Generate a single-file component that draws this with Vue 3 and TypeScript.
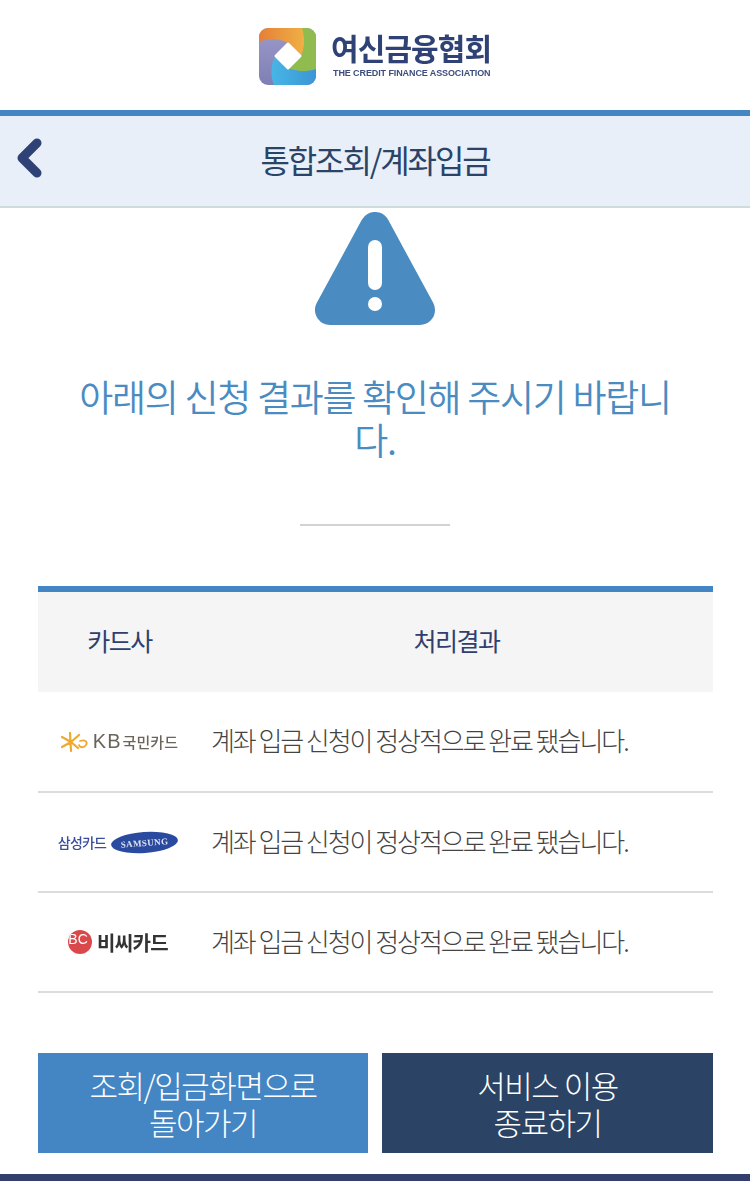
<script setup lang="ts">
type CardRow = { id: 'kb' | 'samsung' | 'bc'; result: string };

const rows: CardRow[] = [
  { id: 'kb', result: '계좌 입금 신청이 정상적으로 완료 됐습니다.' },
  { id: 'samsung', result: '계좌 입금 신청이 정상적으로 완료 됐습니다.' },
  { id: 'bc', result: '계좌 입금 신청이 정상적으로 완료 됐습니다.' },
];
</script>

<template>
  <div class="page">
    <header class="logo-bar">
      <svg class="logo-mark" width="57" height="57" viewBox="0 0 57 57">
        <defs>
          <clipPath id="tile"><rect width="57" height="57" rx="9" /></clipPath>
          <linearGradient id="warm" x1="0" x2="1" y1="0" y2="0">
            <stop offset="0" stop-color="#e57f38" />
            <stop offset="1" stop-color="#f0b044" />
          </linearGradient>
          <linearGradient id="cool" x1="0" x2="1" y1="0" y2="0">
            <stop offset="0" stop-color="#47b6e6" />
            <stop offset="1" stop-color="#3c95d6" />
          </linearGradient>
          <linearGradient id="violet" x1="0" x2="0" y1="0" y2="1">
            <stop offset="0" stop-color="#9c9ac8" />
            <stop offset="1" stop-color="#7f7fb6" />
          </linearGradient>
        </defs>
        <g clip-path="url(#tile)">
          <rect width="57" height="57" fill="url(#violet)" />
          <path d="M0 0h44C46 10 46 20 42 29L29 15C19 10 9 10 0 14z" fill="url(#warm)" />
          <path d="M43 0h14v42C48 44 38 44 29 40L42 29C46 20 46 10 43 0z" fill="#8fbb4f" />
          <path d="M16 29L29 40C38 44 48 44 57 41v16H15C11 47 12 37 16 29z" fill="url(#cool)" />
          <path d="M29 16L41 28 29 40 17 28z" fill="#fff" stroke="#fff" stroke-width="3" stroke-linejoin="round" />
        </g>
      </svg>
      <div class="logo-text">
        <span class="logo-ko">여신금융협회</span>
        <span class="logo-en">THE CREDIT FINANCE ASSOCIATION</span>
      </div>
    </header>

    <nav class="title-bar">
      <svg class="back" width="28" height="40" viewBox="0 0 28 40">
        <path d="M22 5L7 20l15 15" fill="none" stroke="#2f4276" stroke-width="9" stroke-linecap="round" stroke-linejoin="round" />
      </svg>
      <h1 class="title">통합조회/계좌입금</h1>
    </nav>

    <main class="content">
      <svg class="warn" width="120" height="113" viewBox="0 0 120 113">
        <path d="M60 15L15 98h90z" fill="#4a8cc2" stroke="#4a8cc2" stroke-width="30" stroke-linejoin="round" />
        <rect x="53" y="28" width="14" height="50" rx="7" fill="#fff" />
        <circle cx="60" cy="92" r="7" fill="#fff" />
      </svg>

      <p class="message">아래의 신청 결과를 확인해 주시기 바랍니다.</p>
      <div class="divider"></div>

      <div class="result-table">
        <div class="row head">
          <div class="col-card">카드사</div>
          <div class="col-result">처리결과</div>
        </div>
        <div v-for="row in rows" :key="row.id" class="row body">
          <div class="col-card">
            <div v-if="row.id === 'kb'" class="card-logo kb">
              <svg width="28" height="20" viewBox="0 0 28 20">
                <g stroke="#f0a92e" stroke-width="2.2" stroke-linecap="round" fill="none">
                  <path d="M1 5l9 5M1 15l9-5M9 1l1 18M10 10l8-7M10 10l7 6" />
                  <path d="M19 9c5-2 8 1 6 4s-6 3-7 0" stroke-width="1.8" />
                </g>
              </svg>
              <span class="kb-en">KB</span><span class="kb-ko">국민카드</span>
            </div>
            <div v-else-if="row.id === 'samsung'" class="card-logo">
              <span class="ss-ko">삼성카드</span>
              <span class="ss-oval"><span class="ss-en">SAMSUNG</span></span>
            </div>
            <div v-else class="card-logo">
              <span class="bc-dot">BC</span>
              <span class="bc-ko">비씨카드</span>
            </div>
          </div>
          <div class="col-result">{{ row.result }}</div>
        </div>
      </div>

      <div class="actions">
        <button class="btn btn-blue">조회/입금화면으로 돌아가기</button>
        <button class="btn btn-navy">서비스 이용 종료하기</button>
      </div>
    </main>

    <footer class="foot"></footer>
  </div>
</template>

<style>
html, body { margin: 0; background: #fff; }
</style>

<style scoped>
.page {
  width: 750px;
  height: 1181px;
  overflow: hidden;
  font-family: "Noto Sans CJK KR", "Liberation Sans", sans-serif;
  display: flex;
  flex-direction: column;
}

.logo-bar {
  height: 110px;
  display: flex;
  align-items: center;
  justify-content: center;
  gap: 15px;
  box-sizing: border-box;
}
.logo-mark { filter: blur(0.4px); margin-top: 2px; }
.logo-text { filter: blur(0.4px); display: flex; flex-direction: column; margin-top: -2px; width: 160px; }
.logo-ko {
  font-size: 30px;
  line-height: 34px;
  font-weight: 700;
  color: #2f4276;
  letter-spacing: -0.9px;
  white-space: nowrap;
}
.logo-en {
  font-family: "Liberation Sans", sans-serif;
  font-size: 9px;
  line-height: 10px;
  font-weight: 700;
  color: #3d4d7f;
  white-space: nowrap;
  letter-spacing: -0.1px;
  margin-top: 4px;
  padding-left: 2px;
}

.title-bar {
  height: 98px;
  box-sizing: border-box;
  border-top: 6px solid #4486c4;
  border-bottom: 2px solid #cfdcdc;
  background: #e9eff8;
  display: flex;
  align-items: center;
  justify-content: center;
  position: relative;
  padding-bottom: 5px;
}
.back { position: absolute; left: 15px; top: 22px; }
.title {
  margin: 0;
  font-size: 32px;
  font-weight: 400;
  letter-spacing: -2.1px;
  color: #2a4468;
}

.content {
  flex: 1;
  display: flex;
  flex-direction: column;
  align-items: center;
  padding: 4px 37px 0;
}
.warn { display: block; flex: none; }

.message {
  margin: 50px 0 0;
  width: 620px;
  font-size: 37px;
  line-height: 43px;
  font-weight: 350;
  letter-spacing: -1.3px;
  text-align: center;
  color: #4a8cc2;
  word-break: break-all;
}

.divider {
  width: 150px;
  height: 2px;
  background: #d2d2d2;
  margin-top: 63px;
  flex: none;
}

.result-table {
  width: 675px;
  align-self: flex-end;
  margin-top: 60px;
  border-top: 6px solid #4486c4;
}
.row { display: flex; align-items: center; height: 100px; box-sizing: border-box; }
.head {
  background: #f5f5f5;
  color: #2f3f6e;
  font-size: 25px;
  font-weight: 400;
  letter-spacing: -1.5px;
  padding-bottom: 4px;
}
.head .col-card { text-align: center; padding-left: 3px; box-sizing: border-box; }
.head .col-result { text-align: center; padding-left: 2px; }
.body { border-bottom: 2px solid #dcdcdc; }
.head + .body { height: 101px; }
.col-card { width: 160px; flex: none; }
.col-result { flex: 1; }
.body .col-result {
  font-size: 26px;
  font-weight: 300;
  letter-spacing: -2.05px;
  color: #444;
  white-space: nowrap;
  padding-left: 13px;
  padding-bottom: 3px;
}
.head + .body .col-result { padding-bottom: 5px; }

.card-logo {
  display: flex;
  align-items: center;
  justify-content: center;
  white-space: nowrap;
  filter: blur(0.3px);
}
.card-logo.kb { padding-left: 3px; }
.kb-en {
  font-family: "Liberation Sans", sans-serif;
  font-size: 20px;
  letter-spacing: 1px;
  color: #6b645a;
  margin-left: 4px;
}
.kb-ko { font-size: 15px; font-weight: 500; color: #6b645a; margin-left: 1px; letter-spacing: 0.1px; }
.ss-ko { font-size: 14px; font-weight: 500; color: #3a4f9e; letter-spacing: -0.8px; }
.ss-oval {
  width: 67px;
  height: 21px;
  margin-left: 5px;
  border-radius: 50%;
  background: #2a4a9f;
  transform: rotate(-4deg);
  display: flex;
  align-items: center;
  justify-content: center;
}
.ss-en {
  font-family: "Liberation Serif", serif;
  font-size: 9px;
  font-weight: 700;
  color: #dfe5f3;
  letter-spacing: 0.4px;
}
.bc-dot {
  width: 24px;
  height: 24px;
  border-radius: 50%;
  background: #d9494b;
  color: #fff;
  font-family: "Liberation Sans", sans-serif;
  font-size: 14px;
  line-height: 19px;
  text-indent: -4px;
  text-align: center;
  overflow: hidden;
}
.bc-ko { font-size: 20px; font-weight: 700; color: #333; margin-left: 5px; letter-spacing: -0.7px; }

.actions {
  display: grid;
  grid-template-columns: 330px 331px;
  gap: 14px;
  width: 675px;
  align-self: flex-end;
  margin-top: 60px;
}
.btn {
  height: 100px;
  border: none;
  padding: 0 60px;
  color: #fff;
  font-family: inherit;
  font-size: 31px;
  line-height: 37px;
  letter-spacing: -1.5px;
  font-weight: 300;
  word-break: keep-all;
}
.btn-blue { background: #4486c4; padding: 0 40px; }
.btn-navy { background: #2b4465; }

.foot { height: 7px; background: #323f6c; flex: none; }
</style>
